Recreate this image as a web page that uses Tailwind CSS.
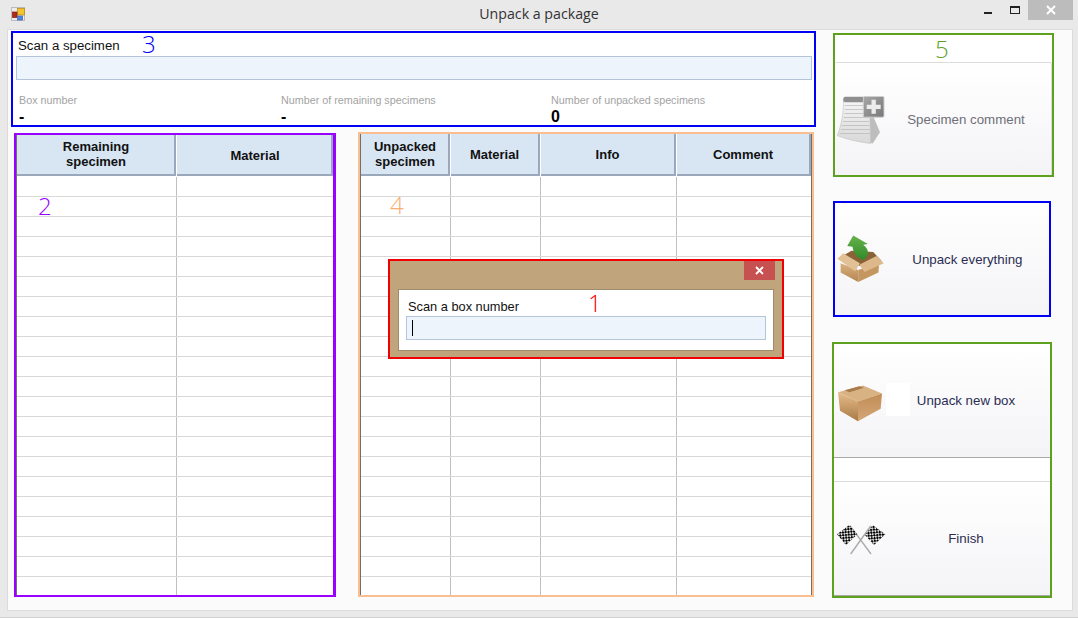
<!DOCTYPE html>
<html lang="en">
  <head>
    <meta charset="UTF-8" />
    <title>Unpack a package</title>
    <script src="https://cdn.jsdelivr.net/npm/@tailwindcss/browser@4"></script>
  </head>

  <body class="bg-[#e9e9e9]">
    <div class="relative w-[1078px] h-[618px] overflow-hidden bg-[#e9e9e9] border-b border-[#d0d0d0] font-['Liberation_Sans',Arial,sans-serif] text-[13px] text-[#111]">
      <!-- title bar -->
      <header class="relative flex items-center justify-center h-[29px] pb-[1px]">
        <svg class="absolute left-[11px] top-[7px]" width="14" height="14" viewBox="0 0 14 14">
          <rect x="0.5" y="0.5" width="13" height="13" fill="#ececec" stroke="#bcbcbc" />
          <rect x="6.5" y="1.5" width="7" height="6.5" fill="#f4c430" stroke="#b8860b" stroke-width="0.7" />
          <rect x="1.5" y="5" width="4.5" height="5.5" fill="#b02a1c" stroke="#8a1c10" stroke-width="0.7" />
          <rect x="6.5" y="9" width="5" height="4" fill="#4f86e0" stroke="#3a66b0" stroke-width="0.7" />
        </svg>
        <h1 class="font-['Open_Sans',sans-serif] text-[14.2px] text-[#333]">Unpack a package</h1>
        <div class="absolute left-[984px] top-[12px] w-[8px] h-[2px] bg-[#222]"></div>
        <div class="absolute left-[1010px] top-[6px] w-[10px] h-[8px] border border-t-2 border-[#222]"></div>
        <div class="absolute left-[1028px] top-0 w-[45px] h-[20px] bg-[#bcbcbc] flex items-center justify-center">
          <svg width="10" height="10" viewBox="0 0 10 10"><path d="M1 1L9 9M9 1L1 9" stroke="#fff" stroke-width="2" /></svg>
        </div>
      </header>

      <!-- client area -->
      <main class="flex ml-[7px] w-[1066px] h-[582px] bg-[#fbfbfb] border border-[#dcdcdc]">
        <section class="ml-[3px] mt-[1px] w-[805px]">
          <div class="w-[805px] h-[96px] bg-white border-2 border-[#0000f5]">
            <div class="h-[23px] pl-[5px] pt-[5px] leading-[16px] text-[13.25px]">Scan a specimen</div>
            <div class="ml-[3px] w-[796px] h-[24px] bg-[#edf4fc] border border-[#b4c4da]"></div>
            <div class="flex mt-[13px] pl-[6px] text-[10.75px] leading-[14px] text-[#a3a3a3]">
              <div class="w-[262px]">Box number</div>
              <div class="w-[270px]">Number of remaining specimens</div>
              <div>Number of unpacked specimens</div>
            </div>
            <div class="flex pl-[6px] pt-[1px] text-[16px] font-bold leading-[18px] text-black">
              <div class="w-[262px]">-</div>
              <div class="w-[270px]">-</div>
              <div>0</div>
            </div>
          </div>

          <div class="flex items-end mt-[5px]">
            <!-- remaining specimens -->
            <div class="ml-[3px] w-[322px] h-[464px] border-2 border-r-[3px] border-[#9a00ff] bg-white">
              <div class="h-full border-l border-[#707070]">
                <div class="grid grid-cols-[160px_156px] h-[41px] font-bold text-center leading-[15px] text-[#111]">
                  <div class="flex items-center justify-center mr-[1px] pb-[2px] pl-[1px] bg-[#d8e6f4] border-r-2 border-b-2 border-[#9aa8bb]">Remaining<br />specimen</div>
                  <div class="flex items-center justify-center pl-[2px] pt-[1px] bg-[#d8e6f4] border-r-2 border-b-2 border-[#9aa8bb]">Material</div>
                </div>
                <div id="remaining-rows" class="mt-[1px] h-[418px] overflow-hidden"></div>
              </div>
            </div>

            <!-- unpacked specimens -->
            <div class="ml-[22px] w-[456px] h-[465px] border-2 border-[#fbbe8e] bg-white">
              <div class="h-full border-x border-[#707070]">
                <div class="grid grid-cols-[90px_90px_136px_134px] h-[42px] font-bold text-center leading-[15px] text-[#111]">
                  <div class="flex items-center justify-center mr-[1px] pl-[1px] bg-[#d8e6f4] border-r-2 border-b-2 border-[#9aa8bb]">Unpacked<br />specimen</div>
                  <div class="flex items-center justify-center mr-[1px] pt-[1px] bg-[#d8e6f4] border-r-2 border-b-2 border-[#9aa8bb]">Material</div>
                  <div class="flex items-center justify-center mr-[1px] pt-[1px] bg-[#d8e6f4] border-r-2 border-b-2 border-[#9aa8bb]">Info</div>
                  <div class="flex items-center justify-center pt-[1px] bg-[#d8e6f4] border-r-2 border-b-2 border-[#9aa8bb]">Comment</div>
                </div>
                <div id="unpacked-rows" class="mt-[1px] h-[418px] overflow-hidden"></div>
              </div>
            </div>
          </div>
        </section>

        <!-- actions -->
        <aside class="ml-[17px] mt-[3px] w-[221px]">
          <div class="w-[221px] h-[144px] bg-white border-2 border-[#5da11f] pt-[27px]">
            <button class="flex items-center w-[217px] h-[113px] pl-[1px] bg-linear-to-b from-white to-[#f4f4f7] border-t border-r border-[#dcdcdc] rounded-t-[2px] text-[#6f6f78]">
              <svg width="50" height="50" viewBox="18 25.5 150 150">
                <defs>
                  <linearGradient id="note" x1="0" y1="0" x2="0" y2="1"><stop offset="0" stop-color="#f6f6f6" /><stop offset="1" stop-color="#d8d8d8" /></linearGradient>
                  <linearGradient id="plus" x1="0" y1="0" x2="1" y2="1"><stop offset="0" stop-color="#a8a8a8" /><stop offset="1" stop-color="#777" /></linearGradient>
                </defs>
                <path d="M112 50L150 140L128 174L104 166Z" fill="#bdbdbd" />
                <path d="M40 42L118 46L122 174C90 170 50 162 22 150C34 120 42 80 40 42Z" fill="url(#note)" stroke="#c4c4c4" stroke-width="2" />
                <path d="M44 60H114M44 72H115M43 84H116M41 96H116M39 108H117M36 120H118M33 132H119M29 144H120" stroke="#b5b5b5" stroke-width="2" />
                <rect x="40" y="34" width="64" height="16" rx="6" fill="#8f8f8f" />
                <rect x="100" y="33" width="62" height="62" rx="4" fill="url(#plus)" stroke="#cfcfcf" stroke-width="3" />
                <path d="M131 43V85M110 64H152" stroke="#ececec" stroke-width="13" />
              </svg>
              <span class="w-[160px] pt-[1px] text-center text-[13.3px]">Specimen comment</span>
            </button>
          </div>

          <button class="flex items-center mt-[24px] w-[218px] h-[116px] pl-[1px] bg-linear-to-b from-white to-[#f4f4f7] border-2 border-[#0000f5] text-[#2b2d52]">
            <svg width="50" height="50" viewBox="18 12 150 150">
              <defs>
                <linearGradient id="boxa" x1="0" y1="0" x2="0" y2="1"><stop offset="0" stop-color="#d9b180" /><stop offset="1" stop-color="#b58650" /></linearGradient>
                <linearGradient id="arrow" x1="0" y1="0" x2="0" y2="1"><stop offset="0" stop-color="#66b34a" /><stop offset="1" stop-color="#2f8a2a" /></linearGradient>
              </defs>
              <path d="M30 82L65 62L130 66L155 92L90 108Z" fill="#8a6238" />
              <path d="M70 16L52 48L68 50C70 68 80 82 100 90C120 76 118 58 100 44L114 42Z" fill="url(#arrow)" />
              <path d="M32 100L85 120V156L32 128Z" fill="url(#boxa)" />
              <path d="M85 120L148 100L146 128L85 156Z" fill="#c49660" />
              <path d="M22 86L40 70L90 100L76 124Z" fill="#e3c197" />
              <path d="M88 104L140 78L162 100L104 126Z" fill="#dcb88a" />
            </svg>
            <span class="w-[164px] pt-[1px] text-center text-[13.3px]">Unpack everything</span>
          </button>

          <div class="mt-[25px] -ml-[1px] w-[220px] h-[256px] bg-white border-2 border-[#5da11f]">
            <button class="relative flex items-center w-[216px] h-[114px] pl-[2px] bg-linear-to-b from-white to-[#f4f4f7] border-b border-[#a8a8a8] text-[#2b2d52]">
              <div class="absolute left-[52px] top-[39px] w-[24px] h-[33px] bg-white"></div>
              <svg class="relative" width="50" height="50" viewBox="18 1.5 150 150">
                <defs>
                  <linearGradient id="boxb" x1="0" y1="0" x2="0" y2="1"><stop offset="0" stop-color="#e6bd8c" /><stop offset="1" stop-color="#a97a44" /></linearGradient>
                  <linearGradient id="boxc" x1="0" y1="0" x2="0" y2="1"><stop offset="0" stop-color="#c08d55" /><stop offset="1" stop-color="#d4a678" /></linearGradient>
                </defs>
                <path d="M24 50L99 30L156 54L84 78Z" fill="#d9b284" />
                <path d="M44 44L88 32L102 37L58 50Z" fill="#a87b4b" />
                <path d="M24 50L84 78V137L30 106Z" fill="url(#boxb)" />
                <path d="M84 78L156 54L152 100L84 137Z" fill="url(#boxc)" />
              </svg>
              <span class="relative w-[160px] pt-[1px] text-center text-[13.3px]">Unpack new box</span>
            </button>
            <button class="flex items-center mt-[23px] w-[216px] h-[115px] pl-[2px] bg-linear-to-b from-white to-[#f4f4f7] border-t border-t-[#dcdcdc] border-b border-b-[#a8a8a8] text-[#2b2d52]">
              <svg width="50" height="50" viewBox="18 -3 150 150">
                <defs>
                  <pattern id="check" width="12" height="12" patternUnits="userSpaceOnUse" patternTransform="rotate(40)">
                    <rect width="12" height="12" fill="#fff" />
                    <rect width="7" height="7" fill="#000" />
                    <rect x="6" y="6" width="7" height="7" fill="#000" />
                  </pattern>
                </defs>
                <path d="M60 32L123 117M122 33L62 117" stroke="#a9a9a9" stroke-width="4" />
                <path d="M21 58L58 30L82 58L48 90Z" fill="url(#check)" />
                <path d="M105 60L128 30L166 58L132 90Z" fill="url(#check)" />
              </svg>
              <span class="w-[160px] text-center text-[13.3px]">Finish</span>
            </button>
          </div>
        </aside>
      </main>

      <!-- modal box scan -->
      <div class="absolute left-[388px] top-[259px] flex flex-col w-[396px] h-[100px] bg-[#bfa47c] border-[2px] border-[#f00000]">
        <div class="flex justify-end h-[28px] pr-[7px]">
          <div class="flex items-center justify-center w-[31px] h-[19px] bg-[#c75050]">
            <svg width="9" height="9" viewBox="0 0 9 9"><path d="M1 1L8 8M8 1L1 8" stroke="#fff" stroke-width="1.8" /></svg>
          </div>
        </div>
        <div class="mx-[8px] h-[62px] bg-white border border-[#a08c6c]">
          <div class="h-[26px] pl-[9px] pt-[9px] leading-[16px] text-[12.8px]">Scan a box number</div>
          <div class="flex items-center ml-[7px] pl-[5px] w-[360px] h-[24px] bg-[#edf4fc] border border-[#b4c4da]">
            <div class="w-[1px] h-[16px] bg-black"></div>
          </div>
        </div>
      </div>

      <!-- annotations -->
      <span class="absolute left-[142px] top-[28px] font-['Open_Sans',sans-serif] font-light text-[24px] leading-[32px] text-[#0000f5]">3</span>
      <span class="absolute left-[38px] top-[190px] font-['Open_Sans',sans-serif] font-light text-[24px] leading-[32px] text-[#9a00ff]">2</span>
      <span class="absolute left-[390px] top-[189px] font-['Open_Sans',sans-serif] font-light text-[24px] leading-[32px] text-[#f9ae74]">4</span>
      <span class="absolute left-[588px] top-[287px] font-['Open_Sans',sans-serif] font-light text-[24px] leading-[32px] text-[#ff0000]">1</span>
      <span class="absolute left-[935px] top-[33px] font-['Open_Sans',sans-serif] font-light text-[24px] leading-[32px] text-[#5da11f]">5</span>
    </div>

    <script>
      function fillRows(id, columns, gridClass) {
        const body = document.getElementById(id);
        let html = "";
        for (let r = 0; r < 21; r++) {
          html += `<div class="grid ${gridClass} h-[20px] border-b border-[#d8d8d8]">`;
          for (let c = 0; c < columns; c++) {
            html += `<div class="${c < columns - 1 ? "border-r border-[#c0c0c0]" : ""}"></div>`;
          }
          html += "</div>";
        }
        body.innerHTML = html;
      }

      fillRows("remaining-rows", 2, "grid-cols-[160px_156px]");
      fillRows("unpacked-rows", 4, "grid-cols-[90px_90px_136px_134px]");
    </script>
  </body>
</html>
